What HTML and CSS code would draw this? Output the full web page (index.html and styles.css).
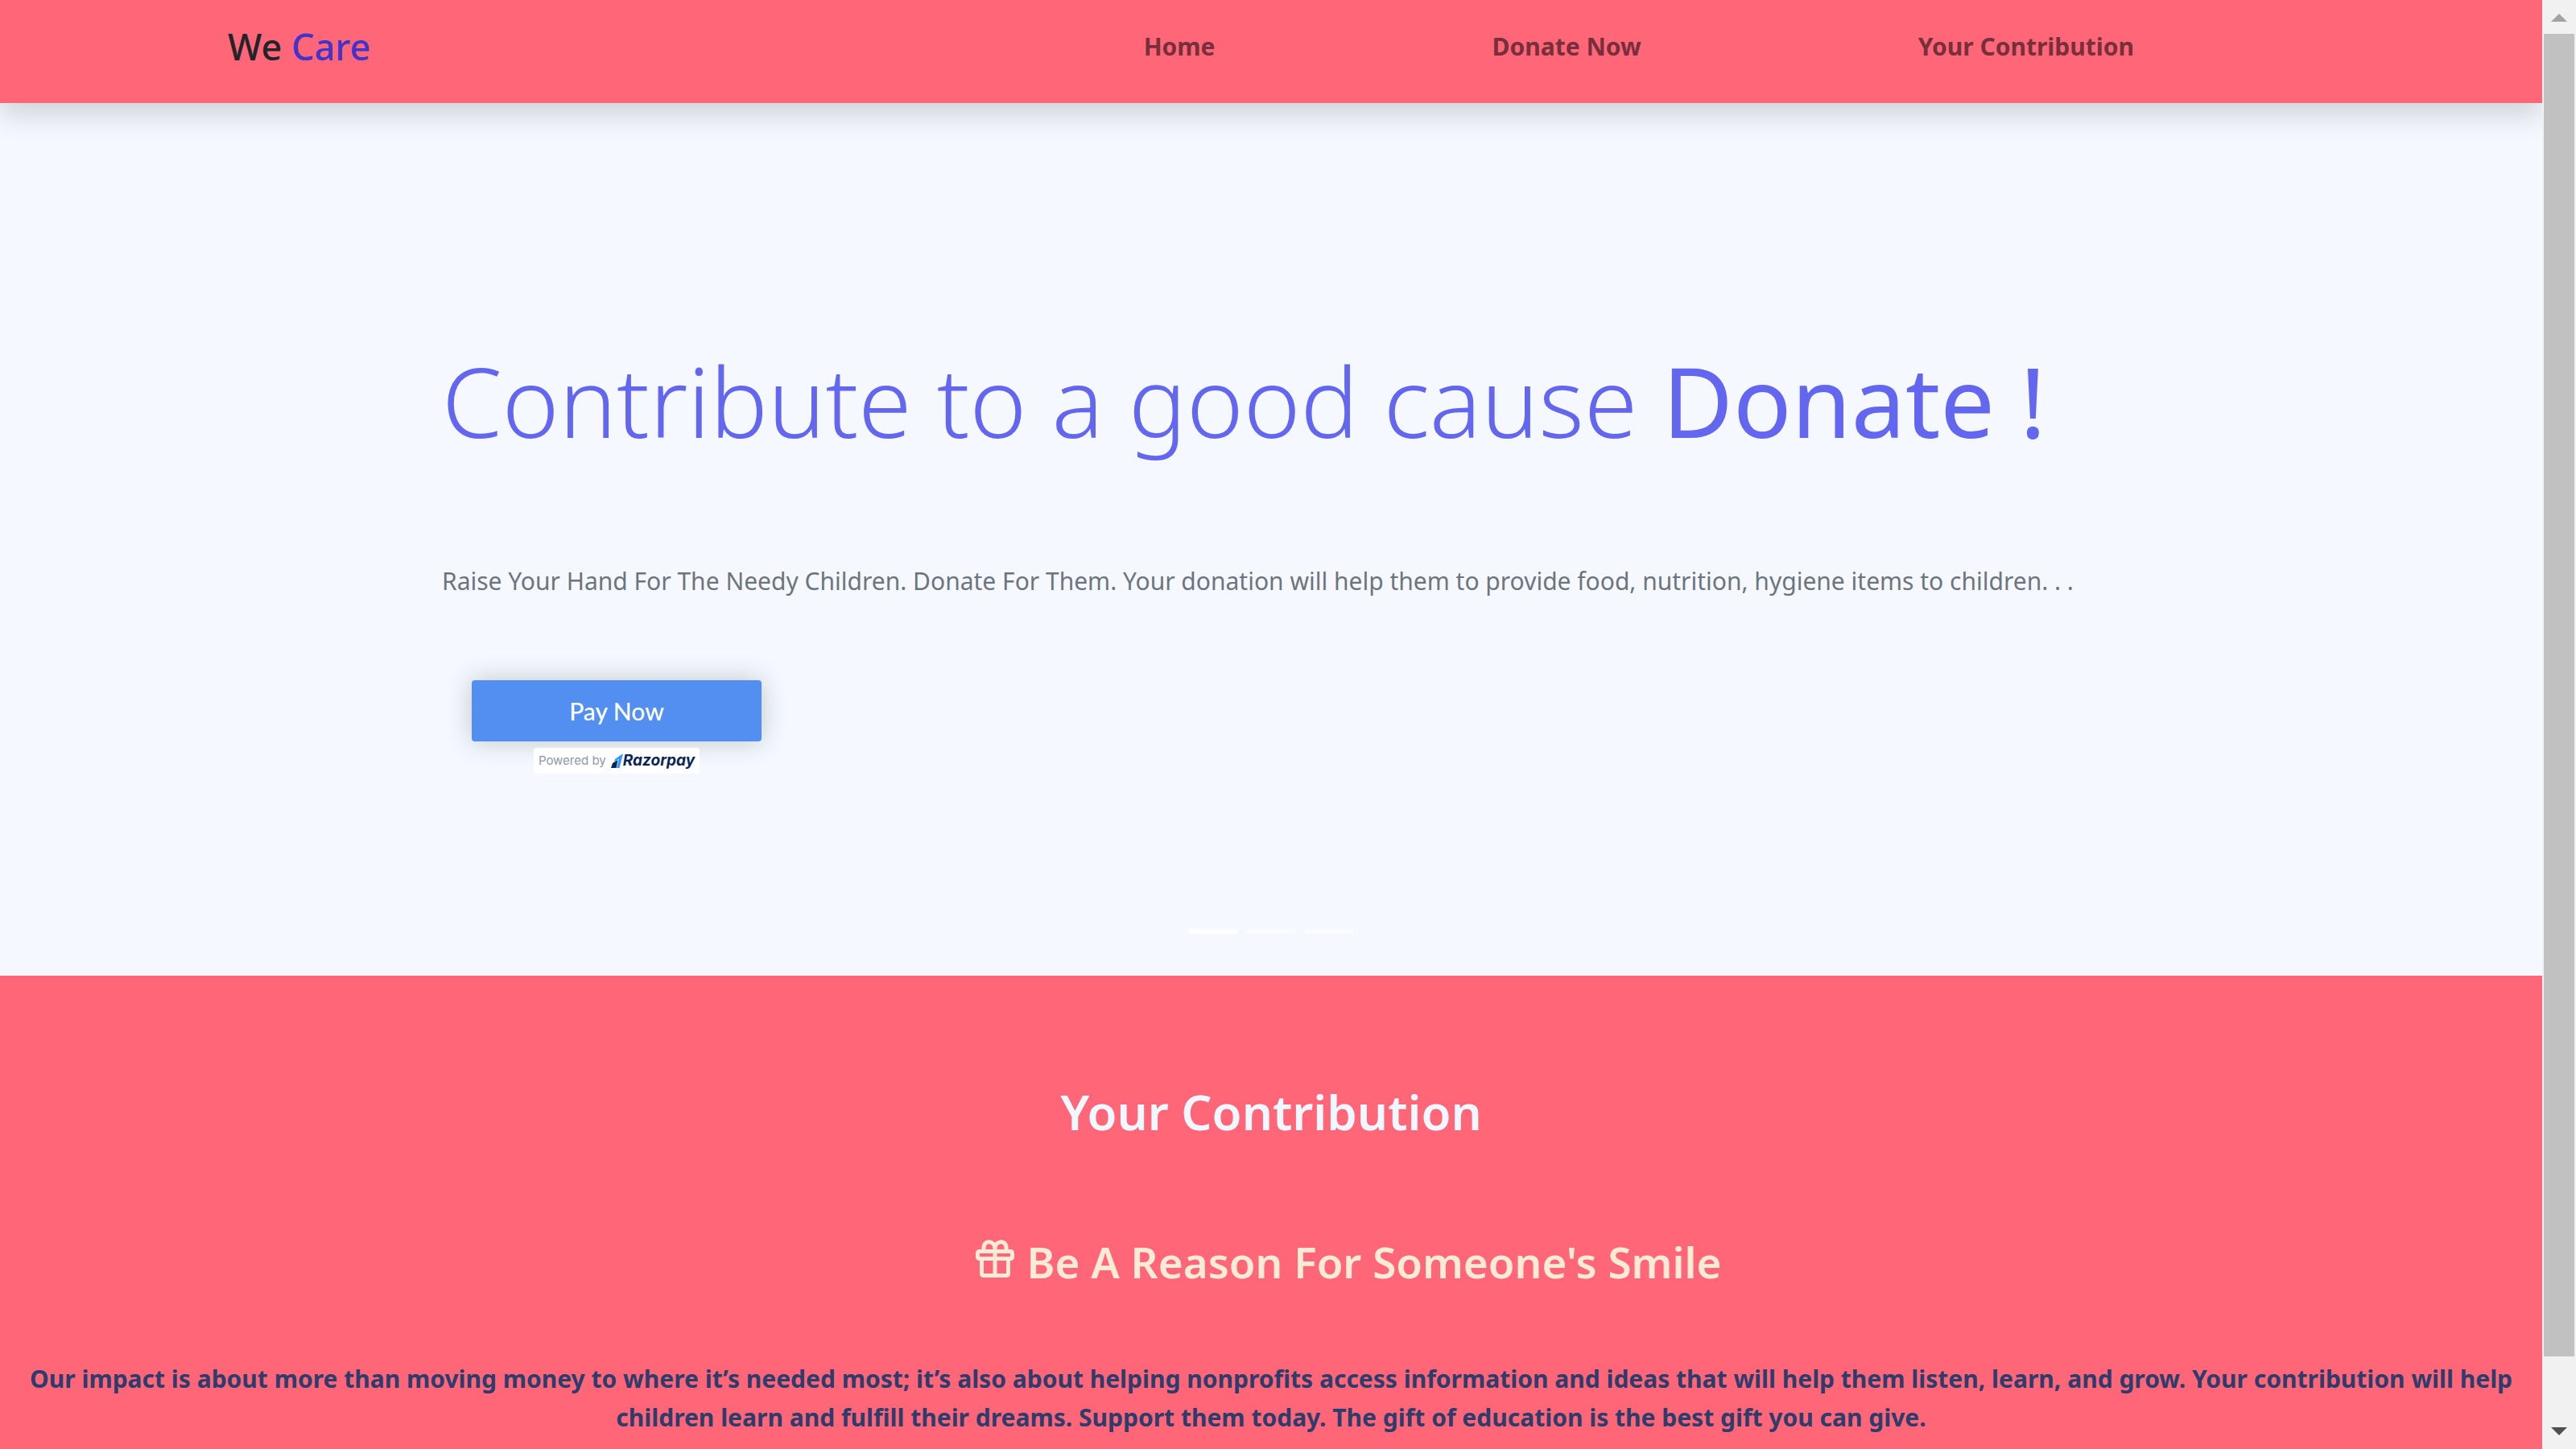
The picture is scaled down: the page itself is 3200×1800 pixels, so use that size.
FILE: index.html
```html
<!DOCTYPE html>
<html lang="en">
<head>
<meta charset="utf-8">
<meta name="viewport" content="width=device-width, initial-scale=1">
<title>We Care</title>
<link rel="stylesheet" href="styles.css">
</head>
<body class="window">
<div class="page">
  <header class="navbar">
    <div class="navbar-inner">
      <a class="brand" href="#">We <span class="brand-accent">Care</span></a>
      <nav class="nav">
        <a href="#home">Home</a>
        <a href="#donate">Donate Now</a>
        <a href="#contribution">Your Contribution</a>
      </nav>
    </div>
  </header>
  <main>
    <section class="hero" id="home">
      <div class="hero-inner">
        <h1 class="hero-title">Contribute to a good cause <span class="hero-strong">Donate !</span></h1>
        <p class="lead">Raise Your Hand For The Needy Children. Donate For Them. Your donation will help them to provide food, nutrition, hygiene items to children. . .</p>
        <form class="payment" id="donate">
          <button class="pay-button" type="button">Pay Now</button>
          <a class="powered" href="#donate">
            <span>Powered by</span>
            <span class="razorpay">
              <svg class="razorpay-mark" viewBox="0 0 15 18" aria-hidden="true"><path fill="#3395ff" d="M15 0 10.500 18H7L9.800 6.800 4 10.500 5 7z"/><path fill="#072654" d="M2 12 8.500 8 6.500 18H0z"/></svg>
              <span>Razorpay</span>
            </span>
          </a>
        </form>
      </div>
      <div class="indicators">
        <button class="indicator active" type="button" aria-label="Slide 1"></button>
        <button class="indicator" type="button" aria-label="Slide 2"></button>
        <button class="indicator" type="button" aria-label="Slide 3"></button>
      </div>
    </section>
    <section class="contribution" id="contribution">
      <h2 class="section-title">Your Contribution</h2>
      <h3 class="reason">
        <svg class="gift" viewBox="0 0 48 48" aria-hidden="true" fill="none" stroke="currentColor" stroke-width="5" stroke-linejoin="round"><rect x="2.500" y="14.500" width="43" height="9" rx="2"/><path d="M7.500 24V42.500a2 2 0 0 0 2 2h29a2 2 0 0 0 2-2V24M24 12V44M10 14V10C10 0 24 0 24 12C24 0 38 0 38 10V14"/></svg>
        <span>Be A Reason For Someone's Smile</span>
      </h3>
      <p class="impact">Our impact is about more than moving money to where it’s needed most; it’s also about helping nonprofits access information and ideas that will help them listen, learn, and grow. Your contribution will help children learn and fulfill their dreams. Support them today. The gift of education is the best gift you can give.</p>
    </section>
  </main>
</div>
<aside class="scrollbar" aria-hidden="true">
  <svg class="arrow" viewBox="0 0 20 10"><path fill="#a3a3a3" d="M0 10 10 0 20 10z"/></svg>
  <div class="track"><div class="thumb"></div></div>
  <svg class="arrow" viewBox="0 0 20 10"><path fill="#505050" d="M0 0H20L10 10z"/></svg>
</aside>
</body>
</html>
```
FILE: styles.css
```css
* {
  box-sizing: border-box;
}

body,
h1,
h2,
h3,
p {
  margin: 0;
}

a {
  color: inherit;
  text-decoration: none;
}

.window {
  display: grid;
  grid-template-columns: minmax(0, 1fr) 42px;
  height: 100vh;
  overflow: hidden;
  font-family: "Noto Sans", "Open Sans", sans-serif;
  font-size: 30px;
  line-height: 48px;
  color: #212529;
}

.page {
  overflow: hidden;
  background: #ff6678;
}

/* Top bar */
.navbar {
  position: relative;
  z-index: 1;
  height: 128px;
  background: #ff6678;
  box-shadow: 0 16px 32px rgba(0, 0, 0, 0.15);
}

.navbar-inner {
  display: flex;
  justify-content: space-between;
  align-items: flex-start;
  max-width: 2640px;
  margin: 0 auto;
  padding: 26px 24px 0;
}

.brand {
  font-size: 45px;
  font-weight: 500;
  line-height: 64px;
}

.brand-accent {
  color: #4433c9;
}

.nav {
  display: flex;
  gap: 344px;
  padding: 8px 224px 0 0;
  font-weight: 700;
  color: #772f3b;
}

/* Hero */
.hero {
  display: flex;
  flex-direction: column;
  justify-content: space-between;
  min-height: 1084px;
  padding-bottom: 52px;
  background: #f5f9ff;
}

.hero-inner {
  width: 2060px;
  max-width: 100%;
  margin: 0 auto;
  padding-top: 290px;
}

.hero-title {
  font-size: 120px;
  font-weight: 300;
  line-height: 160px;
  color: #6366ee;
}

.hero-strong {
  font-weight: 400;
}

.lead {
  margin-top: 120px;
  color: #6c757d;
}

.payment {
  display: flex;
  flex-direction: column;
  align-items: center;
  gap: 8px;
  width: 360px;
  margin: 99px 0 0 37px;
}

.pay-button {
  width: 100%;
  height: 76px;
  border: 0;
  border-radius: 4px;
  background: #528ff0;
  box-shadow: 0 0 32px rgba(23, 31, 37, 0.24);
  font: 500 30px/40px Lato, sans-serif;
  color: #fff;
}

.powered {
  display: flex;
  align-items: center;
  gap: 6px;
  height: 32px;
  padding: 0 6px;
  border-radius: 4px;
  background: #fff;
  font: 15px/24px Inter, sans-serif;
  color: #8d97ad;
}

.razorpay {
  display: flex;
  align-items: center;
  font-size: 19px;
  font-style: italic;
  font-weight: 700;
  color: #072654;
}

.razorpay-mark {
  width: 15px;
  height: 18px;
}

.indicators {
  display: flex;
  justify-content: center;
  gap: 12px;
}

.indicator {
  width: 60px;
  height: 6px;
  padding: 0;
  border: 0;
  background: #fff;
  opacity: 0.5;
}

.indicator.active {
  opacity: 1;
}

/* Contribution */
.contribution {
  padding: 133px 24px 48px;
  text-align: center;
}

.section-title {
  font-size: 60px;
  font-weight: 600;
  line-height: 72px;
  color: #f0f8ff;
}

.reason {
  display: flex;
  justify-content: center;
  gap: 16px;
  margin-top: 119px;
  padding-left: 192px;
  font-size: 53px;
  font-weight: 600;
  line-height: 64px;
  color: #faebd7;
}

.gift {
  width: 48px;
  height: 48px;
  margin-top: 4px;
}

.impact {
  margin-top: 89px;
  font-weight: 700;
  color: #2c3c6c;
}

/* Scrollbar */
.scrollbar {
  display: flex;
  flex-direction: column;
  align-items: center;
  padding: 17px 2px;
  background: #f1f1f1;
}

.arrow {
  width: 20px;
  height: 10px;
}

.track {
  flex: 1;
  width: 100%;
  padding: 15px 0 88px;
}

.thumb {
  height: 100%;
  background: #c1c1c1;
}
```
